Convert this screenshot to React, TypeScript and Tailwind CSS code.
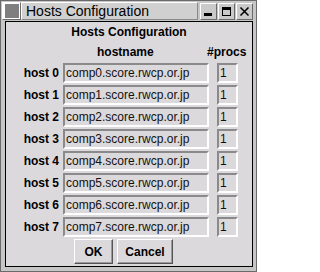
import React from "react";

const hosts = [0, 1, 2, 3, 4, 5, 6, 7];
const font = { fontFamily: '"Liberation Sans", Arial, sans-serif' };

function TitleButton({ children }: { children: React.ReactNode }) {
  return (
    <div className="w-[17px] h-[17px] border-t border-l border-white border-b border-r border-b-[#6a6a6a] border-r-[#6a6a6a] bg-[#cacaca] flex items-center justify-center">
      {children}
    </div>
  );
}

export default function App() {
  return (
    <div
      className="w-[257px] h-[272px] bg-[#c6c6c6] border border-[#6a6a6a] flex flex-col"
      style={font}
    >
      {/* title bar */}
      <div className="h-[19px] flex items-stretch pt-[1px]">
        <div className="w-[19px] h-[18px] ml-[1px] border-t border-l border-white border-b border-r border-b-[#6a6a6a] border-r-[#6a6a6a] bg-white flex items-center justify-center">
          <svg width="14" height="14" viewBox="0 0 14 14">
            {[0, 2, 4, 6, 8, 10, 12].map((y) => (
              <rect key={y} x="0" y={y + 0.5} width="14" height="1" fill="#000" />
            ))}
          </svg>
        </div>
        <div className="w-[177px] h-[18px] border-t border-l border-white border-b border-r border-b-[#8a8a8a] border-r-[#8a8a8a] bg-[#d0d0d0] flex items-center pl-[4px] text-[14px] leading-[16px] text-black">
          Hosts Configuration
        </div>
        <div className="flex gap-[1px] ml-[2px] mt-[1px]">
          <TitleButton>
            <svg width="11" height="11" viewBox="0 0 11 11">
              <rect x="1" y="7" width="8" height="3" fill="#000" />
            </svg>
          </TitleButton>
          <TitleButton>
            <svg width="11" height="11" viewBox="0 0 11 11">
              <rect x="1.5" y="1.5" width="8" height="8" fill="none" stroke="#000" strokeWidth="1" />
              <rect x="1" y="1" width="9" height="3" fill="#000" />
            </svg>
          </TitleButton>
          <TitleButton>
            <svg width="11" height="11" viewBox="0 0 11 11">
              <path d="M1.5 1.5 L9.5 9.5 M9.5 1.5 L1.5 9.5" stroke="#000" strokeWidth="1.6" />
            </svg>
          </TitleButton>
        </div>
      </div>

      {/* content */}
      <div className="ml-[4px] mt-[1px] w-[248px] h-[246px] border border-black bg-[#dcd9dc] flex flex-col text-[12px] text-black">
        <div className="h-[20px] leading-[20px] font-bold text-center">Hosts Configuration</div>
        <div className="h-[20px] leading-[20px] font-bold flex">
          <div className="w-[53px]" />
          <div className="ml-[4px] w-[146px] pl-[34px]">hostname</div>
          <div className="-ml-[2px]">#procs</div>
        </div>
        <div className="mt-[1px] flex flex-col gap-[2px]">
          {hosts.map((i) => (
            <div key={i} className="h-[20px] flex items-center">
              <div className="w-[53px] text-right font-bold leading-[20px]">host {i}</div>
              <div className="ml-[4px] w-[146px] h-[20px] border-2 border-t-[#8a8a8a] border-l-[#8a8a8a] border-b-white border-r-white pl-[1px] leading-[16px] text-[#111] overflow-hidden whitespace-nowrap">
                comp{i}.score.rwcp.or.jp
              </div>
              <div className="ml-[8px] w-[21px] h-[20px] border-2 border-t-[#8a8a8a] border-l-[#8a8a8a] border-b-white border-r-white pl-[1px] leading-[16px] text-[#111]">
                1
              </div>
            </div>
          ))}
        </div>
        <div className="mt-[2px] flex gap-[4px] ml-[68px]">
          <div className="w-[39px] h-[25px] border-t border-l border-white border-b border-r border-b-[#555] border-r-[#555] shadow-[inset_-1px_-1px_0_#9a9a9a] bg-[#dcd9dc] flex items-center justify-center font-bold">
            OK
          </div>
          <div className="w-[56px] h-[25px] border-t border-l border-white border-b border-r border-b-[#555] border-r-[#555] shadow-[inset_-1px_-1px_0_#9a9a9a] bg-[#dcd9dc] flex items-center justify-center font-bold">
            Cancel
          </div>
        </div>
      </div>
    </div>
  );
}
